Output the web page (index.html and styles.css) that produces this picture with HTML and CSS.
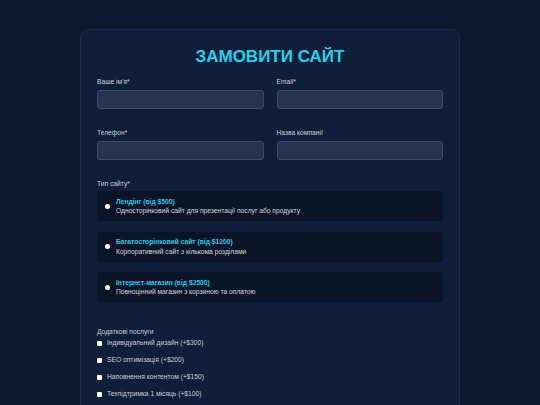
FILE: index.html
```html
<!DOCTYPE html>
<html lang="uk">
<head>
<meta charset="UTF-8">
<meta name="viewport" content="width=device-width, initial-scale=1.0">
<title>Замовити сайт</title>
<link rel="stylesheet" href="styles.css">
</head>
<body>
<div class="page">
    <form class="order-card">
        <h1>ЗАМОВИТИ САЙТ</h1>

        <div class="row">
            <div class="field">
                <label>Ваше ім'я*</label>
                <div class="input"></div>
            </div>
            <div class="field">
                <label>Email*</label>
                <div class="input"></div>
            </div>
        </div>

        <div class="row">
            <div class="field">
                <label>Телефон*</label>
                <div class="input"></div>
            </div>
            <div class="field">
                <label>Назва компанії</label>
                <div class="input"></div>
            </div>
        </div>

        <div class="group">
            <label>Тип сайту*</label>
            <div class="option">
                <span class="radio"></span>
                <div class="option-text">
                    <div class="option-title">Лендінг (від $500)</div>
                    <div class="option-desc">Односторінковий сайт для презентації послуг або продукту</div>
                </div>
            </div>
            <div class="option">
                <span class="radio"></span>
                <div class="option-text">
                    <div class="option-title">Багатосторінковий сайт (від $1200)</div>
                    <div class="option-desc">Корпоративний сайт з кількома розділами</div>
                </div>
            </div>
            <div class="option">
                <span class="radio"></span>
                <div class="option-text">
                    <div class="option-title">Інтернет-магазин (від $2500)</div>
                    <div class="option-desc">Повноцінний магазин з корзиною та оплатою</div>
                </div>
            </div>
        </div>

        <div class="extras">
            <label>Додаткові послуги</label>
            <div class="check"><span class="box"></span>Індивідуальний дизайн (+$300)</div>
            <div class="check"><span class="box"></span>SEO оптимізація (+$200)</div>
            <div class="check"><span class="box"></span>Наповнення контентом (+$150)</div>
            <div class="check"><span class="box"></span>Техпідтримка 1 місяць (+$100)</div>
        </div>
    </form>
</div>
</body>
</html>
```

FILE: styles.css
```css
body {
    margin: 0;
    padding: 0;
    background-color: #0a192f;
    color: #c9ced8;
    font-family: 'Liberation Sans', Arial, sans-serif;
}
.page {
    display: flex;
    justify-content: center;
    padding-top: 29px;
}
.order-card {
    width: 346px;
    padding: 17px 16px 40px;
    background-color: #0f1f3a;
    border: 1px solid #1c2c48;
    border-radius: 8px;
}
h1 {
    margin: 0 0 11px;
    font-size: 17px;
    line-height: 20px;
    text-align: center;
    color: #22d3ee;
}
label {
    display: block;
    font-size: 6.7px;
    line-height: 8px;
    margin-bottom: 4px;
    color: #c9ced8;
}
.row {
    display: grid;
    grid-template-columns: 1fr 1fr;
    column-gap: 13px;
    margin-bottom: 20px;
}
.input {
    height: 17px;
    background-color: #27344f;
    border: 1px solid #3a4966;
    border-radius: 3px;
}
.group {
    margin-top: 20px;
}
.group label {
    margin-bottom: 3px;
}
.option {
    display: flex;
    align-items: center;
    height: 30px;
    padding-left: 8px;
    margin-bottom: 10.5px;
    background-color: #0a1628;
    border-radius: 3px;
    box-sizing: border-box;
}
.radio {
    width: 5px;
    height: 5px;
    border-radius: 50%;
    background-color: #ffffff;
    margin-right: 6px;
    flex-shrink: 0;
}
.option-title {
    font-size: 6.7px;
    line-height: 9.5px;
    font-weight: bold;
    color: #1fcfe6;
}
.option-desc {
    font-size: 6.7px;
    line-height: 9.5px;
    color: #d2d6dd;
}
.extras {
    margin-top: 26px;
}
.extras label {
    margin-bottom: 3px;
}
.check {
    display: flex;
    align-items: center;
    font-size: 6.7px;
    line-height: 8px;
    margin-bottom: 9px;
    color: #c9ced8;
}
.box {
    width: 5px;
    height: 5px;
    background-color: #ffffff;
    border-radius: 1px;
    margin: 0 5px 0 0;
}
```
